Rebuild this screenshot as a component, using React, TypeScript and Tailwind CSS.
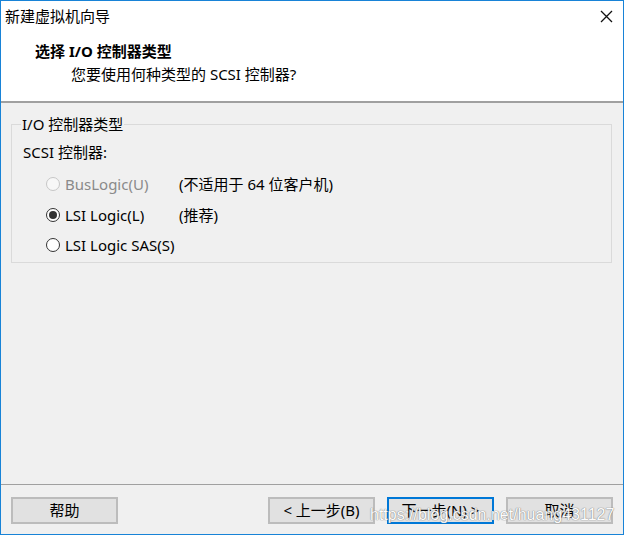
import React from "react";

function Radio({ checked, disabled }: { checked?: boolean; disabled?: boolean }) {
  return (
    <span
      className={
        "flex items-center justify-center w-[14px] h-[14px] rounded-full border " +
        (disabled ? "border-[#c6c6c6] bg-[#f7f7f7]" : "border-[#333333] bg-white")
      }
    >
      {checked ? <span className="w-[8px] h-[8px] rounded-full bg-[#333333]" /> : null}
    </span>
  );
}

function Btn({ children, primary }: { children: React.ReactNode; primary?: boolean }) {
  return (
    <div
      className={
        "w-[107px] h-[27px] flex items-center justify-center bg-[#e1e1e1] text-[15px] text-black border-2 " +
        (primary ? "border-[#0078d7]" : "border-[#bcbcbc]")
      }
    >
      {children}
    </div>
  );
}

export default function App() {
  return (
    <div className="relative w-[624px] h-[535px] border border-[#1883d7] bg-[#f0f0f0] flex flex-col font-['Noto_Sans','Noto_Sans_CJK_SC',sans-serif] text-black overflow-hidden">
      {/* header */}
      <div className="h-[100px] bg-white flex flex-col">
        <div className="h-[30px] flex items-center justify-between pl-[4px] pr-[10px]">
          <span className="text-[15px] leading-none">新建虚拟机向导</span>
          <svg width="13" height="13" viewBox="0 0 13 13" className="mt-[1px]">
            <path d="M1 1 L12 12 M12 1 L1 12" stroke="#111" strokeWidth="1.3" />
          </svg>
        </div>
        <div className="pl-[34px] pt-[11px] text-[15px] font-bold leading-[18px]">选择 I/O 控制器类型</div>
        <div className="pl-[70px] pt-[5px] text-[15px] leading-[18px]">您要使用何种类型的 SCSI 控制器?</div>
      </div>
      <div className="h-[2px] bg-[#a0a0a0]" />
      {/* body */}
      <div className="flex-1 flex flex-col">
        <fieldset className="mt-[12px] ml-[10px] w-[601px] h-[148px] border border-[#dadada] px-[12px]">
          <legend className="px-[1px] -ml-[3px] text-[15px] leading-[18px]">I/O 控制器类型</legend>
          <div className="mt-[10px] text-[15px] leading-[18px] -ml-[1px]">SCSI 控制器:</div>
          <div className="mt-[14px] flex flex-col gap-[12.5px] pl-[22px] text-[15px] leading-[18px]">
            <div className="flex items-center h-[18px]">
              <Radio disabled />
              <span className="ml-[5px] w-[114px] text-[#8a8a8a]">BusLogic(U)</span>
              <span>(不适用于 64 位客户机)</span>
            </div>
            <div className="flex items-center h-[18px]">
              <Radio checked />
              <span className="ml-[5px] w-[114px]">LSI Logic(L)</span>
              <span>(推荐)</span>
            </div>
            <div className="flex items-center h-[18px]">
              <Radio />
              <span className="ml-[5px]">LSI Logic SAS(S)</span>
            </div>
          </div>
        </fieldset>
      </div>
      {/* footer */}
      <div className="h-[1px] bg-[#a0a0a0] mb-[12px]" />
      <div className="h-[37px] flex items-start pl-[10px] pr-[10px]">
        <Btn>帮助</Btn>
        <div className="flex-1" />
        <Btn>&lt; 上一步(B)</Btn>
        <div className="w-[12px]" />
        <Btn primary>下一步(N) &gt;</Btn>
        <div className="w-[12px]" />
        <Btn>取消</Btn>
      </div>
      <div className="absolute left-[369px] top-[504px] whitespace-nowrap text-[16px] leading-[20px] font-['Liberation_Sans',sans-serif] text-white [text-shadow:0_0_1px_#777,0_0_1px_#777] opacity-90">
        https://blog.csdn.net/huang431127
      </div>
    </div>
  );
}
